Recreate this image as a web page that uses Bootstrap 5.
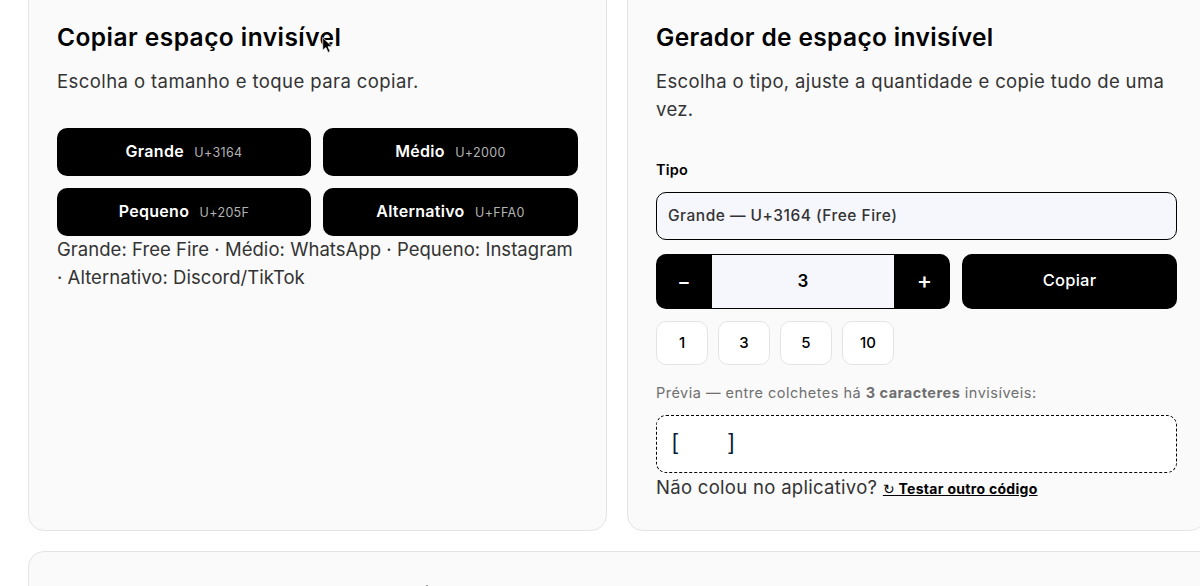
<!doctype html>
<html lang="pt-BR">
<head>
<meta charset="utf-8">
<title>Espaço invisível</title>
<link href="https://cdn.jsdelivr.net/npm/bootstrap@5.3.0/dist/css/bootstrap.min.css" rel="stylesheet">
<style>
html,body{height:586px;overflow:hidden;background:#fff}
body{font-family:Inter,"Liberation Sans",sans-serif;color:#333;position:relative}
.pg{padding:0 28px;margin-top:-20px;width:1240px}
.duo{display:grid;grid-template-columns:579px 579px;gap:20px}
.pane{background:#fafafa;border:1px solid #e4e4e4;border-radius:16px;padding:28px}
.pane-a,.pane-b{height:551px}
.pane-low{margin-top:20px;height:100px;width:1240px}
.ttl{font-size:24.5px;font-weight:600;color:#000;line-height:36px;margin:10px 0 0;letter-spacing:.45px}
.pane-b .ttl{letter-spacing:.36px}
.sub{font-size:18.5px;line-height:28px;margin:12px 0 0;color:#333;letter-spacing:.42px}
.pane-b .sub{letter-spacing:.36px}
.tiles{display:grid;grid-template-columns:254px 255px;gap:12px}
.sub + .tiles{margin-top:33px}
.tile{height:48px;background:#000;color:#fff;border:0;border-radius:10px;font-size:16px;font-weight:600;padding:0 0 2px;letter-spacing:.3px}
.tile:hover{background:#000;color:#fff}
.tile span{font-size:12.5px;font-weight:400;color:#b3b3b3;margin-left:6px;letter-spacing:.35px}
.note{font-size:18.5px;line-height:28px;margin:-1px 0 0;color:#333;letter-spacing:.04px}
.lbl{font-size:14.5px;font-weight:600;color:#000;margin:36px 0 0;line-height:22px;display:block;letter-spacing:.2px}
.pick{appearance:none;width:100%;height:48px;margin-top:11px;background:#f6f7fd;border:1px solid #000;border-radius:10px;padding:0 11px;font-size:15.5px;font-weight:500;color:#333;font-family:inherit;letter-spacing:.5px;display:block}
.stepline{display:grid;grid-template-columns:294px 215px;gap:12px;margin-top:14px}
.stp{height:55px;flex-wrap:nowrap}
.stp .btn{width:56px;background:#000;color:#fff;border:0;font-size:20px;font-weight:500;padding:0;border-radius:10px 0 0 10px}
.stp .btn:last-child{border-radius:0 10px 10px 0;font-size:23px;padding:0 0 1px 5px}
.stp .form-control{background:#f6f7fd;border:1px solid #000;border-width:1px 0;border-radius:0;text-align:center;font-size:17px;font-weight:600;color:#000;padding:0;box-shadow:none}
.go{height:55px;background:#000;color:#fff;border:0;border-radius:10px;font-size:16.5px;font-weight:500;letter-spacing:.25px;padding:0 0 2px}
.chips{display:flex;gap:10px;margin-top:12px}
.chp{width:52px;height:44px;background:#fff;border:1px solid #e4e4e4;border-radius:10px;font-size:15px;font-weight:500;color:#000;padding:0}
.hint{font-size:14.5px;color:#6f6f6f;margin:17px 0 0;line-height:21px;letter-spacing:.49px}
.hint b{font-weight:700}
.prev{height:58px;margin-top:12px;background:#fff;border:1px dashed #000;border-radius:10px;display:flex;align-items:center;padding:0 15px 5px;font-size:22px;color:#0b1b3a;font-family:"Liberation Sans",sans-serif;font-weight:400}
.prev i{display:inline-block;width:50px}
.ask{font-size:18.5px;line-height:28px;margin:0;color:#333;letter-spacing:.3px}
.ask a{font-size:14px;font-weight:700;color:#000;text-decoration:underline;letter-spacing:.3px}
.ask a span{font-family:"DejaVu Sans",sans-serif;font-weight:400}
.tick{width:2px;height:1px;background:#9a9a9a;margin:5px 0 0 369px}
.ptr{position:absolute;left:322px;top:37px;width:11px;height:17px}
</style>
</head>
<body>
<main class="pg">
  <div class="duo">
    <section class="pane pane-a">
      <h2 class="ttl">Copiar espaço invisível</h2>
      <p class="sub">Escolha o tamanho e toque para copiar.</p>
      <div class="tiles">
        <button class="btn tile">Grande <span>U+3164</span></button>
        <button class="btn tile">Médio <span>U+2000</span></button>
        <button class="btn tile">Pequeno <span>U+205F</span></button>
        <button class="btn tile">Alternativo <span>U+FFA0</span></button>
      </div>
      <p class="note">Grande: Free Fire · Médio: WhatsApp · Pequeno: Instagram · Alternativo: Discord/TikTok</p>
    </section>
    <section class="pane pane-b">
      <h2 class="ttl">Gerador de espaço invisível</h2>
      <p class="sub">Escolha o tipo, ajuste a quantidade e copie tudo de uma vez.</p>
      <label class="lbl" for="tp">Tipo</label>
      <select class="pick" id="tp"><option>Grande — U+3164 (Free Fire)</option></select>
      <div class="stepline">
        <div class="input-group stp">
          <button class="btn">−</button>
          <input class="form-control" value="3" aria-label="Quantidade">
          <button class="btn">+</button>
        </div>
        <button class="btn go">Copiar</button>
      </div>
      <div class="chips">
        <button class="btn chp">1</button>
        <button class="btn chp">3</button>
        <button class="btn chp">5</button>
        <button class="btn chp">10</button>
      </div>
      <p class="hint">Prévia — entre colchetes há <b>3 caracteres</b> invisíveis:</p>
      <div class="prev">[<i></i>]</div>
      <p class="ask">Não colou no aplicativo? <a href="#"><span>↻</span> Testar outro código</a></p>
    </section>
  </div>
  <section class="pane pane-low"><div class="tick"></div></section>
</main>
<svg class="ptr" viewBox="0 0 10 16" aria-hidden="true"><path d="M.5.5v12l3-2.6 2 4.6 2-.9-2-4.5h4z" fill="#000" stroke="#fff" stroke-width=".7"/></svg>
</body>
</html>
